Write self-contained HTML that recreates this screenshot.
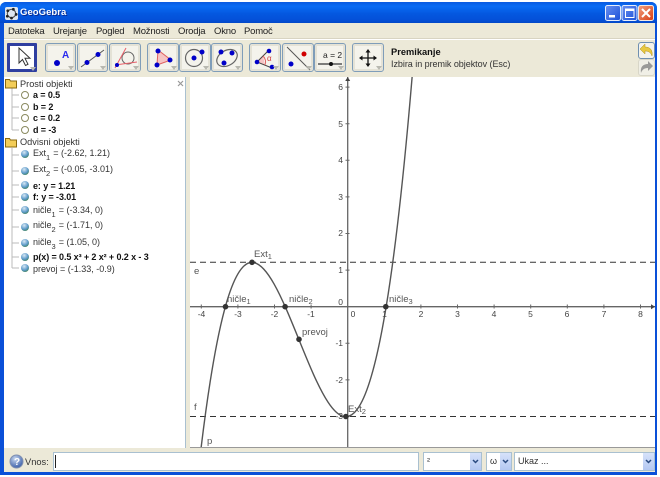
<!DOCTYPE html>
<html><head><meta charset="utf-8"><style>
html,body{margin:0;padding:0;background:#fff;width:660px;height:477px;overflow:hidden}
#w{position:relative;width:660px;height:477px;overflow:hidden;background:#fff;font-family:"Liberation Sans",sans-serif;color:#222}
.a{position:absolute}
#frame{left:0;top:2px;width:657px;height:473px;background:#0a50d8;border-radius:6px 6px 0 0}
#title{left:0;top:2px;width:657px;height:21px;border-radius:6px 6px 0 0;background:linear-gradient(#0a5ae0,#0a6cf4 20%,#0458e0 55%,#0450d8 85%,#0348c8)}
#tt{left:20px;top:7px;font:bold 9.5px/12px "Liberation Sans",sans-serif;letter-spacing:.05px;color:#fff;text-shadow:1px 1px 0 #0a2a90}
#body{left:4px;top:23px;width:651px;height:449px;background:#ece9d8}
.m{position:absolute;top:25px;font-size:9.5px;letter-spacing:-.2px;color:#222;line-height:13px}
#sep{left:4px;top:38px;width:651px;height:1px;background:#d8d4c2;border-bottom:1px solid #fff}
.b{position:absolute;top:43px;height:27px;width:29px;border:1px solid #7f9db9;border-radius:3px;background:#f4f3ec;box-shadow:inset 0 0 0 2px #e4e2d6}
.b svg{position:absolute;left:0;top:0}
.tri{position:absolute;right:1px;bottom:1px;width:0;height:0;border-left:3px solid transparent;border-right:3px solid transparent;border-top:4px solid #b8b8b0}
#left{left:4px;top:77px;width:182px;height:371px;background:#fff;border-right:1px solid #a9c0d0;box-sizing:border-box}
.t{position:absolute;left:33px;font-size:9px;line-height:12px;white-space:nowrap;color:#333}
.t sub{font-size:7.5px;line-height:0;vertical-align:-4px;margin-right:3px}
.t.d{font-weight:bold;color:#111;letter-spacing:-.1px}
.h{position:absolute;left:20px;font-size:9.2px;line-height:12px;color:#333}
#graph{left:190px;top:77px;width:465px;height:371px;background:#fff;border-bottom:1px solid #999;box-sizing:border-box}
#inp{left:53px;top:452px;width:366px;height:19px;background:#fff;border:1px solid #a9c0d0;box-sizing:border-box}
.cb{position:absolute;top:452px;height:19px;background:#fff;border:1px solid #a9c0d0;box-sizing:border-box;font-size:9px;line-height:16px;padding-left:3px;color:#333}
.ar{position:absolute;right:0;top:0;width:11px;height:17px;background:linear-gradient(#d6e2fa,#b4c8f2)}
</style></head><body><div id="w">
<div class="a" id="frame"></div>
<div class="a" id="title"></div>
<svg class="a" style="left:5px;top:7px" width="13" height="13" viewBox="0 0 14 14"><rect width="14" height="14" fill="#dfe6f0" rx="2"/><circle cx="7" cy="7" r="4.5" fill="none" stroke="#555" stroke-width="1.2"/><circle cx="3" cy="4" r="1.5" fill="#222"/><circle cx="9" cy="2.5" r="1.5" fill="#222"/><circle cx="12" cy="8" r="1.5" fill="#222"/><circle cx="7" cy="12" r="1.5" fill="#222"/><circle cx="2.5" cy="10" r="1.5" fill="#222"/></svg>
<div class="a" id="tt">GeoGebra</div>
<svg class="a" style="left:605px;top:5px" width="50" height="17" viewBox="0 0 50 17">
<defs><linearGradient id="bl" x1="0" y1="0" x2="1" y2="1"><stop offset="0" stop-color="#6a90f0"/><stop offset="1" stop-color="#1a50d8"/></linearGradient><linearGradient id="rd" x1="0" y1="0" x2="1" y2="1"><stop offset="0" stop-color="#f0a080"/><stop offset="1" stop-color="#d83a10"/></linearGradient></defs>
<rect x=".5" y=".5" width="15" height="15" rx="2" fill="url(#bl)" stroke="#e8eefc"/><rect x="4" y="10" width="6" height="2.5" fill="#fff"/>
<rect x="17" y=".5" width="15" height="15" rx="2" fill="url(#bl)" stroke="#e8eefc"/><rect x="20.5" y="4" width="8.5" height="8.5" fill="none" stroke="#fff"/><rect x="20.5" y="4" width="8.5" height="2" fill="#fff"/>
<rect x="33.5" y=".5" width="15" height="15" rx="2" fill="url(#rd)" stroke="#f4e8e0"/><path d="M37 4l8 8M45 4l-8 8" stroke="#fff" stroke-width="2"/></svg>
<div class="a" id="body"></div>
<span class="m" style="left:8px">Datoteka</span><span class="m" style="left:53px">Urejanje</span><span class="m" style="left:96px">Pogled</span><span class="m" style="left:133px">Možnosti</span><span class="m" style="left:178px">Orodja</span><span class="m" style="left:214px">Okno</span><span class="m" style="left:244px">Pomoč</span>
<div class="a" id="sep"></div>

<div class="b" style="left:7px;width:24px;height:23px;border:3px solid #2f3fa0;border-radius:1px;background:#fff;box-shadow:none"><svg style="left:-3px;top:-3px" width="30" height="29" viewBox="0 0 30 29"><path d="M12 5v15l3.5-3.5 3 6 2.5-1.2-3-6h5z" fill="#fff" stroke="#333"/></svg><i class="tri" style="right:-2px;bottom:-2px"></i></div>
<div class="b" style="left:45px"><svg width="29" height="27"><circle cx="11" cy="19" r="3" fill="#0000c8"/><text x="16" y="14" font-size="10" font-weight="bold" fill="#2a2aee">A</text></svg><i class="tri"></i></div>
<div class="b" style="left:77px"><svg width="30" height="27"><path d="M3 23L26 6" stroke="#555"/><circle cx="9" cy="18.5" r="2.5" fill="#0000c8"/><circle cx="20" cy="10.5" r="2.5" fill="#0000c8"/></svg><i class="tri"></i></div>
<div class="b" style="left:109px;width:30px"><svg width="30" height="27"><circle cx="18" cy="14" r="6" fill="none" stroke="#666"/><path d="M5 24L16 4M5 21l22-3" stroke="#e8606a"/><circle cx="7" cy="21" r="2" fill="#0000c8"/></svg><i class="tri"></i></div>
<div class="b" style="left:147px;width:30px"><svg width="30" height="27"><path d="M10 6L23 16 9 21z" fill="#f6c4c4" stroke="#e06060"/><circle cx="10" cy="7" r="2.5" fill="#0000c8"/><circle cx="22" cy="16" r="2.5" fill="#0000c8"/><circle cx="9" cy="21" r="2.5" fill="#0000c8"/></svg><i class="tri"></i></div>
<div class="b" style="left:179px;width:30px"><svg width="30" height="27"><circle cx="14" cy="14" r="8.5" fill="none" stroke="#666" stroke-width="1.2"/><circle cx="14" cy="14" r="2.5" fill="#0000c8"/><circle cx="22" cy="8" r="2.5" fill="#0000c8"/></svg><i class="tri"></i></div>
<div class="b" style="left:211px;width:30px"><svg width="30" height="27"><ellipse cx="15" cy="14" rx="11" ry="7.5" transform="rotate(-30 15 14)" fill="none" stroke="#666" stroke-width="1.2"/><circle cx="9" cy="8" r="2.5" fill="#0000c8"/><circle cx="20" cy="9" r="2.5" fill="#0000c8"/><circle cx="12" cy="19" r="2.5" fill="#0000c8"/></svg><i class="tri"></i></div>
<div class="b" style="left:249px;width:30px"><svg width="30" height="27"><path d="M7 18l6-6 2 9z" fill="#f6c4c4"/><path d="M19 6L7 18l15 6" fill="none" stroke="#444"/><path d="M13 12a8 8 0 0 1 2 9" fill="none" stroke="#e06060"/><text x="17" y="17" font-size="8" fill="#d04040">α</text><circle cx="19" cy="7" r="2.3" fill="#0000c8"/><circle cx="7" cy="18" r="2.3" fill="#0000c8"/><circle cx="22" cy="23" r="2.3" fill="#0000c8"/></svg><i class="tri"></i></div>
<div class="b" style="left:282px;width:30px"><svg width="30" height="27"><path d="M4 3L27 26" stroke="#555"/><circle cx="21" cy="10" r="2.5" fill="#d00000"/><circle cx="8" cy="20" r="2.5" fill="#0000c8"/></svg><i class="tri"></i></div>
<div class="b" style="left:314px;width:30px"><svg width="30" height="27"><text x="8" y="14" font-size="8.5" fill="#222">a = 2</text><path d="M3 20h24" stroke="#555" stroke-width="1.5"/><circle cx="16" cy="20" r="2" fill="#111"/></svg><i class="tri"></i></div>
<div class="b" style="left:352px;width:30px"><svg width="30" height="27"><path d="M15 7v14M8 14h14" stroke="#111" stroke-width="1.3"/><path d="M15 5l-2.5 3.5h5zM15 23l-2.5-3.5h5zM6 14l3.500-2.500v5zM24 14l-3.500-2.500v5z" fill="#111"/></svg><i class="tri"></i></div>
<div class="a" style="left:391px;top:46px;font-size:9.3px;font-weight:bold;line-height:13px;color:#111">Premikanje</div>
<div class="a" style="left:391px;top:58px;font-size:9px;letter-spacing:-.04px;line-height:13px;color:#333;white-space:nowrap">Izbira in premik objektov (Esc)</div>
<div class="a" style="left:638px;top:42px;width:15px;height:15px;border:1px solid #6f8fb0;border-radius:3px;background:#f4f3ec"><svg width="15" height="15"><path d="M1 6l5-5v3c5 0 8 3 7 9-1-3-3-5-7-5v3z" fill="#e8c840" stroke="#b09020" stroke-width=".5"/></svg></div>
<div class="a" style="left:638px;top:59px;width:15px;height:15px;border:1px solid #d8d6c8;border-radius:3px;background:#f0efe6"><svg width="15" height="15"><path d="M14 6L9 1v3C4 4 1 7 2 13c1-3 3-5 7-5v3z" fill="#9a9a98"/></svg></div>

<div class="a" id="left"></div>
<svg class="a" style="left:0;top:77px" width="190" height="210">
<path d="M12 11V53M12 18h7M12 30h7M12 41h7M12 53h7M12 71V191M12 78h7M12 94h7M12 108h7M12 120h7M12 133h7M12 150h7M12 166h7M12 180h7M12 191h7" stroke="#bbb"/>
<g fill="#f3cd58" stroke="#8a6a10"><path d="M5.5 2.5h4l1 1.500h6v7h-11z"/><path d="M5.5 61.500h4l1 1.500h6v7h-11z"/></g>
<path d="M178 4l5 5M183 4l-5 5" stroke="#999" stroke-width="1.2"/>
<g fill="#fff" stroke="#8a8a60"><circle cx="25" cy="18" r="3.5"/><circle cx="25" cy="30" r="3.5"/><circle cx="25" cy="41" r="3.5"/><circle cx="25" cy="53" r="3.5"/></g>
<defs><radialGradient id="g" cx=".4" cy=".3" r=".8"><stop offset="0" stop-color="#d8e8f4"/><stop offset=".6" stop-color="#5a98c8"/><stop offset="1" stop-color="#408040"/></radialGradient></defs>
<g fill="url(#g)"><circle cx="25" cy="77" r="4"/><circle cx="25" cy="94" r="4"/><circle cx="25" cy="108" r="4"/><circle cx="25" cy="120" r="4"/><circle cx="25" cy="133" r="4"/><circle cx="25" cy="150" r="4"/><circle cx="25" cy="166" r="4"/><circle cx="25" cy="180" r="4"/><circle cx="25" cy="191" r="4"/></g>
</svg>
<div class="h" style="top:78px">Prosti objekti</div>
<div class="t d" style="top:89px">a = 0.5</div><div class="t d" style="top:101px">b = 2</div><div class="t d" style="top:112px">c = 0.2</div><div class="t d" style="top:124px">d = -3</div>
<div class="h" style="top:136px">Odvisni objekti</div>
<div class="t" style="top:147px">Ext<sub>1</sub>= (-2.62, 1.21)</div>
<div class="t" style="top:163px">Ext<sub>2</sub>= (-0.05, -3.01)</div>
<div class="t d" style="top:180px">e: y = 1.21</div><div class="t d" style="top:191px">f: y = -3.01</div>
<div class="t" style="top:204px">ničle<sub>1</sub>= (-3.34, 0)</div>
<div class="t" style="top:219px">ničle<sub>2</sub>= (-1.71, 0)</div>
<div class="t" style="top:236px">ničle<sub>3</sub>= (1.05, 0)</div>
<div class="t d" style="top:251px">p(x) = 0.5 x³ + 2 x² + 0.2 x - 3</div>
<div class="t" style="top:263px">prevoj = (-1.33, -0.9)</div>

<div class="a" id="graph"></div>
<svg class="a" style="left:0;top:0" width="660" height="477">
<defs><clipPath id="c"><rect x="190" y="77" width="465" height="370"/></clipPath></defs>
<g clip-path="url(#c)">
<path d="M190 306.700H655M347.700 77V448" stroke="#666" stroke-width="1.3"/>
<path d="M201.300 304.500v4M237.900 304.500v4M274.500 304.500v4M311.100 304.500v4M384.300 304.500v4M420.900 304.500v4M457.500 304.500v4M494.100 304.500v4M530.700 304.500v4M567.300 304.500v4M603.900 304.500v4M640.500 304.500v4M345.500 87.100h4M345.500 123.700h4M345.500 160.300h4M345.500 196.900h4M345.500 233.500h4M345.500 270.100h4M345.500 343.300h4M345.500 379.900h4M345.500 416.500h4" stroke="#666"/>
<path d="M347.700 77l-2.500 4h5zM655 306.700l-4-2.500v5z" fill="#444"/>
<path d="M190 262.300H655M190 416.500H655" stroke="#333" stroke-dasharray="6 4"/>
<path d="M199.500 461.200C271.450-158.100 343.400 953.100 415.400 36.600" fill="none" stroke="#555" stroke-width="1.4"/>
<g fill="#333"><circle cx="225.500" cy="306.700" r="2.800"/><circle cx="252" cy="262.300" r="2.800"/><circle cx="285.100" cy="306.700" r="2.800"/><circle cx="299" cy="339.300" r="2.800"/><circle cx="345.900" cy="416.500" r="2.800"/><circle cx="385.800" cy="306.700" r="2.800"/></g>
</g>
<g font-family="Liberation Sans,sans-serif" font-size="8.5" fill="#444" text-anchor="middle">
<text x="201.500" y="317">-4</text><text x="238" y="317">-3</text><text x="274.500" y="317">-2</text><text x="311" y="317">-1</text><text x="353" y="317">0</text><text x="384.500" y="317">1</text><text x="421" y="317">2</text><text x="457.500" y="317">3</text><text x="494" y="317">4</text><text x="530.500" y="317">5</text><text x="567" y="317">6</text><text x="604" y="317">7</text><text x="640.500" y="317">8</text>
</g>
<g font-family="Liberation Sans,sans-serif" font-size="8.5" fill="#444" text-anchor="end">
<text x="343" y="90">6</text><text x="343" y="127">5</text><text x="343" y="163">4</text><text x="343" y="200">3</text><text x="343" y="236">2</text><text x="343" y="273">1</text><text x="343" y="305">0</text><text x="343" y="346">-1</text><text x="343" y="383">-2</text><text x="343" y="419">-3</text>
</g>
<g font-family="Liberation Sans,sans-serif" font-size="9.5" fill="#555">
<text x="194" y="274">e</text><text x="194" y="410">f</text><text x="207" y="444">p</text>
<text x="254" y="257">Ext<tspan font-size="7.5" dy="2">1</tspan></text>
<text x="227" y="302">ničle<tspan font-size="7.5" dy="2">1</tspan></text>
<text x="289" y="302">ničle<tspan font-size="7.5" dy="2">2</tspan></text>
<text x="389" y="302">ničle<tspan font-size="7.5" dy="2">3</tspan></text>
<text x="302" y="335">prevoj</text>
<text x="348" y="412">Ext<tspan font-size="7.5" dy="2">2</tspan></text>
</g>
</svg>

<svg class="a" style="left:9px;top:454px" width="15" height="15"><defs><radialGradient id="q" cx=".4" cy=".3" r=".8"><stop offset="0" stop-color="#c8d8f0"/><stop offset="1" stop-color="#2a50a0"/></radialGradient></defs><circle cx="7.5" cy="7.5" r="6.5" fill="url(#q)" stroke="#8090b0"/><text x="5" y="11" font-size="10" font-weight="bold" fill="#fff" font-family="Liberation Sans,sans-serif">?</text></svg>
<div class="a" style="left:25px;top:456px;font-size:9.3px;line-height:12px;color:#333">Vnos:</div>
<div class="a" id="inp"><div class="a" style="left:1px;top:2px;width:1px;height:13px;background:#222"></div></div>
<div class="cb" style="left:423px;width:59px">²<div class="ar"><svg width="11" height="17"><path d="M3 7l2.5 2.5L8 7" fill="none" stroke="#2a4a80" stroke-width="1.5"/></svg></div></div>
<div class="cb" style="left:486px;width:26px">ω<div class="ar"><svg width="11" height="17"><path d="M3 7l2.5 2.5L8 7" fill="none" stroke="#2a4a80" stroke-width="1.5"/></svg></div></div>
<div class="cb" style="left:514px;width:141px">Ukaz ...<div class="ar"><svg width="11" height="17"><path d="M3 7l2.5 2.5L8 7" fill="none" stroke="#2a4a80" stroke-width="1.5"/></svg></div></div>
</div></body></html>
